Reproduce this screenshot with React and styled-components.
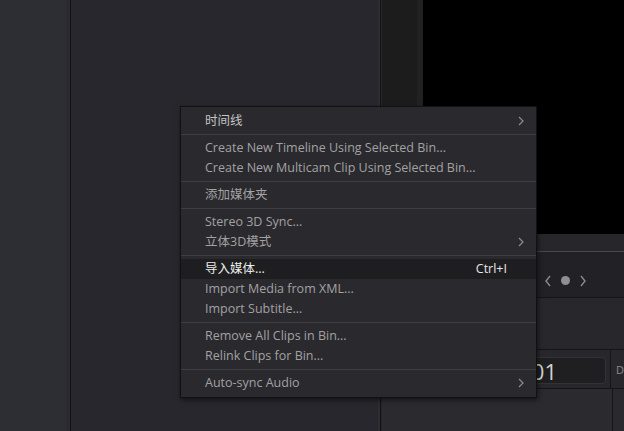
import React from "react";
import styled, { createGlobalStyle } from "styled-components";

const Global = createGlobalStyle`
  html, body { margin: 0; padding: 0; background: #28272d; }
  body { font-family: "Open Sans", "Noto Sans CJK SC", sans-serif; overflow: hidden; }
  #root { width: 624px; height: 431px; }
`;

const Screen = styled.div`
  position: relative;
  width: 624px;
  height: 431px;
  display: flex;
  overflow: hidden;
  background: #28272d;
`;

const Sidebar = styled.div`
  width: 66px;
  flex: none;
  background: #2d2e33;
  border-right: 4px solid #2a2a2f;
  box-shadow: 1px 0 0 #111216;
  margin-right: 1px;
`;

const MainPanel = styled.div`
  width: 307px;
  flex: none;
  background: #28272d;
  border-right: 2px solid #2d2d32;
  box-shadow: 1px 0 0 #121215;
  margin-right: 2px;
`;

const RightColumn = styled.div`
  flex: 1;
  display: flex;
  flex-direction: column;
  min-width: 0;
`;

const Viewer = styled.div`
  height: 234px;
  flex: none;
  display: flex;
`;

const ViewerSide = styled.div`
  width: 35px;
  background: #1c1c1c;
  border-right: 6px solid #212121;
`;

const ViewerCanvas = styled.div`
  flex: 1;
  background: #000;
`;

const Strip = styled.div`
  height: 17px;
  background: #27272b;
  border-bottom: 1px solid #48484d;
`;

const Toolbar = styled.div`
  height: 33px;
  padding-top: 12px;
  background: #222226;
  border-bottom: 1px solid #151517;
  display: flex;
  align-items: center;
  padding-left: 163px;
  gap: 10px;
  color: #8a8a8e;
`;

const Dot = styled.span`
  width: 9px;
  height: 9px;
  border-radius: 50%;
  background: #8f8f93;
`;

const Area = styled.div`
  height: 51px;
  background: #28282c;
  border-bottom: 1px solid #151517;
`;

const TimecodeRow = styled.div`
  height: 38px;
  display: flex;
  background: #28282c;
  border-bottom: 1px solid #151517;
`;

const TimecodeCell = styled.div`
  width: 231px;
  display: flex;
  align-items: flex-start;
  padding-top: 7px;
  box-sizing: border-box;
  justify-content: flex-end;
  padding-right: 4px;
  border-right: 1px solid #151517;
`;

const TimecodeBox = styled.div`
  width: 120px;
  height: 27px;
  box-sizing: border-box;
  border-radius: 4px;
  background: #1f1f21;
  border: 1px solid #333336;
  display: flex;
  align-items: center;
  justify-content: flex-end;
  padding-right: 48px;
  color: #d2d2d2;
  font-size: 22px;
  font-family: "Open Sans", sans-serif;
`;

const SideCell = styled.div`
  flex: 1;
  display: flex;
  align-items: center;
  padding-left: 5px;
  color: #8a8a8e;
  font-size: 11px;
`;

const Lower = styled.div`
  flex: 1;
  display: flex;
`;

const LowerLeft = styled.div`
  width: 231px;
  box-sizing: border-box;
  background: #2b2b2f;
  border-right: 1px solid #151517;
`;

const LowerRight = styled.div`
  flex: 1;
  background: #2a2a2e;
`;

const Menu = styled.div`
  position: absolute;
  left: 180px;
  top: 106px;
  width: 357px;
  box-sizing: border-box;
  padding: 4px 0;
  background: #2a292e;
  border: 1px solid #111113;
  box-shadow: 1px 2px 5px rgba(0, 0, 0, 0.55);
  font-size: 12.5px;
`;

const Item = styled.div`
  height: 20px;
  display: flex;
  align-items: center;
  padding: 0 11px 0 24px;
  color: ${(p) => (p.$active ? "#ededed" : p.$bright ? "#c4c4c4" : "#a2a2a2")};
  background: ${(p) => (p.$active ? "#1e1e20" : "transparent")};
  white-space: nowrap;
`;

const Label = styled.span`
  flex: 1;
  line-height: 20px;
  margin-top: -1px;
`;

const Shortcut = styled.span`
  margin-right: 18px;
  margin-top: -1px;
  color: #e6e6e6;
`;

const Chevron = styled.svg`
  width: 6px;
  height: 10px;
  margin-right: 1px;
`;

const Separator = styled.div`
  height: 1px;
  margin: 3px 0;
  background: #3d3d42;
`;

const Arrow = () => (
  <Chevron viewBox="0 0 6 10">
    <path d="M1 1 L5 5 L1 9" fill="none" stroke="#8c8c8c" strokeWidth="1.2" />
  </Chevron>
);

const NavArrow = ({ dir }) => (
  <svg width="6" height="12" viewBox="0 0 6 12">
    <path
      d={dir === "left" ? "M5 1 L1 6 L5 11" : "M1 1 L5 6 L1 11"}
      fill="none"
      stroke="#8a8a8e"
      strokeWidth="1.4"
    />
  </svg>
);

const groups = [
  [{ label: "时间线", sub: true, bright: true }],
  [
    { label: "Create New Timeline Using Selected Bin..." },
    { label: "Create New Multicam Clip Using Selected Bin..." },
  ],
  [{ label: "添加媒体夹" }],
  [{ label: "Stereo 3D Sync..." }, { label: "立体3D模式", sub: true }],
  [
    { label: "导入媒体...", shortcut: "Ctrl+I", active: true },
    { label: "Import Media from XML..." },
    { label: "Import Subtitle..." },
  ],
  [{ label: "Remove All Clips in Bin..." }, { label: "Relink Clips for Bin..." }],
  [{ label: "Auto-sync Audio", sub: true }],
];

export default function App() {
  return (
    <>
      <Global />
      <Screen>
        <Sidebar />
        <MainPanel />
        <RightColumn>
          <Viewer>
            <ViewerSide />
            <ViewerCanvas />
          </Viewer>
          <Strip />
          <Toolbar>
            <NavArrow dir="left" />
            <Dot />
            <NavArrow dir="right" />
          </Toolbar>
          <Area />
          <TimecodeRow>
            <TimecodeCell>
              <TimecodeBox>01</TimecodeBox>
            </TimecodeCell>
            <SideCell>D</SideCell>
          </TimecodeRow>
          <Lower>
            <LowerLeft />
            <LowerRight />
          </Lower>
        </RightColumn>
        <Menu>
          {groups.map((g, gi) => (
            <React.Fragment key={gi}>
              {gi > 0 && <Separator />}
              {g.map((it) => (
                <Item key={it.label} $active={it.active} $bright={it.bright}>
                  <Label>{it.label}</Label>
                  {it.shortcut && <Shortcut>{it.shortcut}</Shortcut>}
                  {it.sub && <Arrow />}
                </Item>
              ))}
            </React.Fragment>
          ))}
        </Menu>
      </Screen>
    </>
  );
}
